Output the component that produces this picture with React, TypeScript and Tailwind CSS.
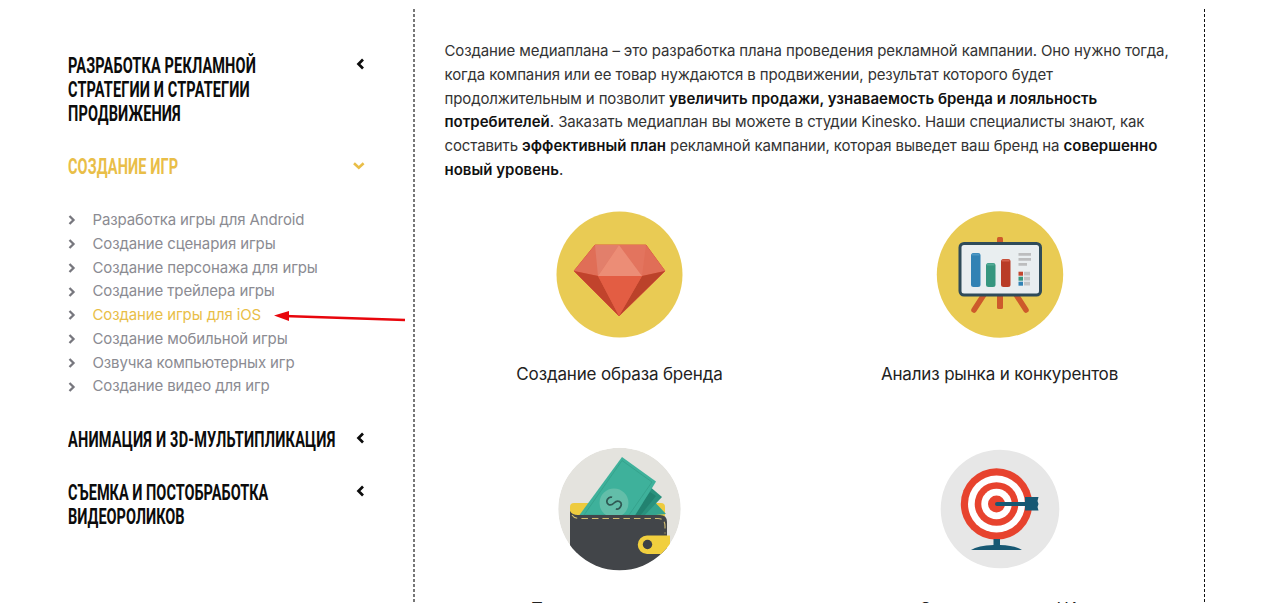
import type { ReactNode } from "react";

const games = [
  "Разработка игры для Android",
  "Создание сценария игры",
  "Создание персонажа для игры",
  "Создание трейлера игры",
  "Создание игры для iOS",
  "Создание мобильной игры",
  "Озвучка компьютерных игр",
  "Создание видео для игр",
];

function Title({ lines, active, tracking = "" }: { lines: string[]; active?: boolean; tracking?: string }) {
  return (
    <div className="flex w-[297px] justify-between">
      <h3
        className={
          "w-0 origin-left scale-x-[0.66] whitespace-nowrap font-[Roboto,sans-serif] text-[22px] font-bold leading-[24px] " +
          tracking +
          (active ? " text-[#e9be48]" : " text-[#0c0c0c]")
        }
      >
        {lines.map((line) => (
          <span key={line} className="block">
            {line}
          </span>
        ))}
      </h3>
      {active ? (
        <svg viewBox="0 0 12 12" className="mt-[5px] size-3" fill="none" stroke="#e9be48" strokeWidth="2.6">
          <path d="M1 3.300L5.800 7.800l4.800-4.500" />
        </svg>
      ) : (
        <svg viewBox="0 0 12 12" className="mt-[4px] size-3" fill="none" stroke="#0c0c0c" strokeWidth="2.7">
          <path d="M10 1.500L5.500 6l4.500 4.500" />
        </svg>
      )}
    </div>
  );
}

function Diamond() {
  return (
    <svg viewBox="0 0 160 150" className="h-[150px] w-[160px]">
      <circle cx="79.5" cy="74.5" r="63" fill="#e9cb54" />
      <path d="M55 45h51l19 26-46 45-45-45z" fill="#dc5b40" stroke="#dc5b40" strokeWidth="1" strokeLinejoin="round" />
      <path d="M55 45h51l19 26-23 5H58l-24-5z" fill="#e06e57" />
      <path d="M34 71l24 5 21 40z" fill="#c1432c" />
      <path d="M125 71l-23 5-23 40z" fill="#bb422a" />
      <path d="M55 45h24L58 76z" fill="#e27f6b" />
      <path d="M106 45H79l23 31z" fill="#e3745e" />
      <path d="M79 45l23 31H58z" fill="#ec8d76" />
      <path d="M58 76h44l-23 40z" fill="#e35d43" />
    </svg>
  );
}

function Board() {
  return (
    <svg viewBox="0 0 160 150" className="h-[150px] w-[160px]">
      <circle cx="80" cy="74.5" r="63.2" fill="#e9cb54" />
      <path d="M65 93L54 110M95 93l11 17" stroke="#cd5a2b" strokeWidth="5.5" strokeLinecap="round" />
      <rect x="77" y="37" width="6" height="72" rx="1.5" fill="#cd5a2b" />
      <rect x="40" y="43.5" width="80.5" height="51.5" rx="4" fill="#e9eef0" stroke="#2f4b59" strokeWidth="3" />
      <rect x="51" y="53" width="9.5" height="34" rx="2.5" fill="#3182b4" />
      <rect x="66" y="63" width="9.5" height="24" rx="2.5" fill="#36967f" />
      <rect x="81" y="59" width="9.5" height="28" rx="2.5" fill="#b93c27" />
      <path d="M52 54.5h7.5" stroke="#4b97c4" strokeWidth="2" />
      <path d="M67 64.5h7.5" stroke="#52ab96" strokeWidth="2" />
      <path d="M82 60.5h7.5" stroke="#d4604c" strokeWidth="2" />
      <path d="M98.5 54.3H111M98.5 59.3H111M98.5 64.3h8.500" stroke="#bcbdbe" strokeWidth="2.8" />
      <path d="M104 73.7h6M104 78.7h6M104 83.7h6" stroke="#c3c4c5" strokeWidth="3.8" />
      <path d="M98.5 73.7h4.5" stroke="#c2462f" strokeWidth="4" />
      <path d="M98.5 78.7h4.5" stroke="#36967f" strokeWidth="4" />
      <path d="M98.5 83.7h4.5" stroke="#3182b4" strokeWidth="4" />
    </svg>
  );
}

function Wallet() {
  return (
    <svg viewBox="0 0 160 150" className="h-[150px] w-[160px]">
      <defs>
        <clipPath id="wallet">
          <circle cx="79.5" cy="74" r="61.3" />
        </clipPath>
      </defs>
      <g clipPath="url(#wallet)">
        <circle cx="79.5" cy="74" r="61.3" fill="#e4e3de" />
        <rect x="30" y="68" width="95" height="20" rx="4" fill="#eecb3e" />
        <path d="M110 62l16 17-30 3z" fill="#35a48e" />
        <path d="M108 50l14 12-19 20H86z" fill="#2a917d" />
        <path d="M110 57l6 4-17 21h-8z" fill="#228270" />
        <path d="M82 22l34 24.500-3 5L94 82H38z" fill="#3eb19b" />
        <path d="M82 25.500L112 47 89 80H44z" fill="none" stroke="#36a38d" strokeWidth="1" />
        <circle cx="74" cy="68" r="14.5" fill="#63bea9" />
        <g transform="rotate(-60 74 68)" fill="none" stroke="#2f5953" strokeWidth="1.7">
          <path d="M78 63.500q-.5-3-4-3t-4 3.500q0 3 4 4t4 4q0 3.500-4 3.500t-4-3" />
        </g>
        <path d="M30 76q2 4 8 4h82q7 0 7 7v50H30z" fill="#424549" />
        <path d="M32 80q2 3.500 8 3.500h78q7 0 7 8v7" fill="none" stroke="#d1bd70" strokeWidth="1.1" strokeDasharray="6.500 4" />
        <path d="M130 100.500h-23a9 9 0 0 0 0 18.500h23z" fill="#f1cf3e" />
        <circle cx="107.5" cy="109.5" r="4.7" fill="#3e4146" />
      </g>
    </svg>
  );
}

function Target() {
  return (
    <svg viewBox="0 0 160 150" className="h-[150px] w-[160px]">
      <circle cx="80" cy="74" r="59.3" fill="#e7e7e7" />
      <circle cx="76.5" cy="69" r="35.7" fill="#e7432e" />
      <circle cx="76.5" cy="69" r="28.5" fill="#fff" />
      <circle cx="76.5" cy="69" r="21.8" fill="#e7432e" />
      <circle cx="76.5" cy="69" r="15.2" fill="#fff" />
      <circle cx="76.5" cy="69" r="8.5" fill="#e7432e" />
      <path d="M77 67h28v-5h13.500l-1 4 1 3-1 3 1 3.500H105V71H77a2 2 0 0 1 0-4z" fill="#175873" />
      <path d="M73.500 104h6.500v6q15 .5 22 5H51q7-4.500 22.500-5z" fill="#175873" />
    </svg>
  );
}

function Stage({ icon, label }: { icon: ReactNode; label: string }) {
  return (
    <div className="flex h-[235px] w-[380px] flex-col items-center">
      {icon}
      <p className="mt-3 whitespace-nowrap text-[17px] leading-6 tracking-[-0.16px] text-[#222]">{label}</p>
    </div>
  );
}

export default function App() {
  return (
    <div className="flex h-[603px] w-[1280px] overflow-hidden bg-white font-[Inter,sans-serif] text-[#333]">
      <aside className="w-[413px] shrink-0 pl-[68px] pt-[53.500px]">
        <Title
          lines={["РАЗРАБОТКА РЕКЛАМНОЙ", "СТРАТЕГИИ И СТРАТЕГИИ", "ПРОДВИЖЕНИЯ"]}
          tracking="tracking-[0.19px]"
        />
        <div className="h-[29px]" />
        <Title lines={["СОЗДАНИЕ ИГР"]} tracking="tracking-[0.15px]" active />
        <ul className="mt-[30px] pb-[29px]">
          {games.map((game) => (
            <li
              key={game}
              className="flex h-[23.750px] items-center whitespace-nowrap text-[15px] tracking-[-0.13px] text-[#8b8b92]"
            >
              <svg
                viewBox="0 0 8 10"
                className="mr-[16.500px] h-[10px] w-2 shrink-0"
                fill="none"
                stroke="#77777e"
                strokeWidth="2.3"
              >
                <path d="M1.500 1l4 4-4 4" />
              </svg>
              {game === "Создание игры для iOS" ? (
                <>
                  <span className="text-[#e9be48]">{game}</span>
                  <svg viewBox="0 0 132 12" className="relative top-px ml-[13px] h-3 w-[132px] shrink-0">
                    <path d="M10 6L131 10" stroke="#e8060c" strokeWidth="2.6" />
                    <path d="M0 5.500L15 1v10z" fill="#e8060c" />
                  </svg>
                </>
              ) : (
                game
              )}
            </li>
          ))}
        </ul>
        <Title lines={["АНИМАЦИЯ И 3D-МУЛЬТИПЛИКАЦИЯ"]} tracking="tracking-[0.3px]" />
        <div className="h-[29px]" />
        <Title lines={["СЪЕМКА И ПОСТОБРАБОТКА", "ВИДЕОРОЛИКОВ"]} />
      </aside>

      <div className="mt-[9px] w-[2px] shrink-0 bg-[repeating-linear-gradient(to_bottom,#777_0px,#777_3px,transparent_3px,transparent_5px)]" />

      <main className="w-[789px] shrink-0">
        <p className="whitespace-nowrap pl-[29.500px] pt-[39px] text-[15px] leading-[23.750px] tracking-[-0.12px] [&_b]:font-semibold [&_b]:tracking-[0.01px] [&_b]:text-[#111]">
          Создание медиаплана – это разработка плана проведения рекламной кампании. Оно нужно тогда,
          <br />
          когда компания или ее товар нуждаются в продвижении, результат которого будет
          <br />
          продолжительным и позволит <b>увеличить продажи, узнаваемость бренда и лояльность</b>
          <br />
          <b>потребителей</b>. Заказать медиаплан вы можете в студии Kinesko. Наши специалисты знают, как
          <br />
          составить <b>эффективный план</b> рекламной кампании, которая выведет ваш бренд на <b>совершенно</b>
          <br />
          <b>новый уровень</b>.
        </p>
        <div className="mt-[18.500px] grid grid-cols-[380px_380px] pl-[14.500px]">
          <Stage icon={<Diamond />} label="Создание образа бренда" />
          <Stage icon={<Board />} label="Анализ рынка и конкурентов" />
          {/* the next row of captions runs past the fold */}
          <div className="[&_p]:mt-[11.500px]">
            <Stage icon={<Wallet />} label="Планирование затрат" />
          </div>
          <div className="[&_p]:mt-[11.500px]">
            <Stage icon={<Target />} label="Сегментация по ЦА" />
          </div>
        </div>
      </main>

      <div className="mt-[9px] w-px shrink-0 bg-[repeating-linear-gradient(to_bottom,#111_0px,#111_3px,transparent_3px,transparent_5px)]" />
    </div>
  );
}
